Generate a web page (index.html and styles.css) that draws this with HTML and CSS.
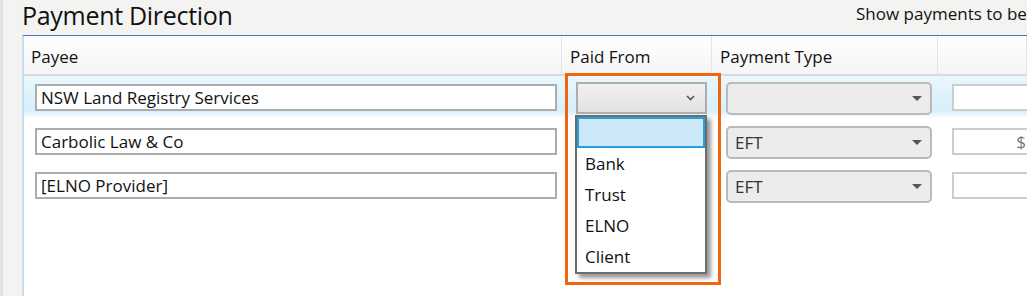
FILE: index.html
```html
<!DOCTYPE html>
<html lang="en">
<head>
  <meta charset="UTF-8" />
  <title>Payment Direction</title>
  <link rel="stylesheet" href="styles.css">
</head>
<body>
  <div class="window">
    <div class="titlebar">
      <h1>Payment Direction</h1>
      <span class="show-toggle">Show payments to be</span>
    </div>

    <div class="panel">
      <div class="grid head">
        <div class="cell">Payee</div>
        <div class="cell">Paid From</div>
        <div class="cell">Payment Type</div>
        <div class="cell"></div>
      </div>

      <div class="grid row selected">
        <div class="cell payee"><div class="textbox">NSW Land Registry Services</div></div>
        <div class="cell paid"><div class="combo flat">
          <svg class="chevron" width="9" height="6" viewBox="0 0 9 6"><polyline points="1,1 4.5,4.5 8,1" fill="none" stroke="#5a5a5a" stroke-width="1.6"/></svg>
        </div></div>
        <div class="cell type"><div class="combo round"><span class="arrow"></span></div></div>
        <div class="cell amount"><div class="textbox money"></div></div>
      </div>

      <div class="grid row">
        <div class="cell payee"><div class="textbox">Carbolic Law &amp; Co</div></div>
        <div class="cell paid"></div>
        <div class="cell type"><div class="combo round"><span class="value">EFT</span><span class="arrow"></span></div></div>
        <div class="cell amount"><div class="textbox money">$</div></div>
      </div>

      <div class="grid row">
        <div class="cell payee"><div class="textbox">[ELNO Provider]</div></div>
        <div class="cell paid"></div>
        <div class="cell type"><div class="combo round"><span class="value">EFT</span><span class="arrow"></span></div></div>
        <div class="cell amount"><div class="textbox money"></div></div>
      </div>
    </div>

    <ul class="dropdown">
      <li class="current"></li>
      <li>Bank</li>
      <li>Trust</li>
      <li>ELNO</li>
      <li>Client</li>
    </ul>

    <div class="callout"></div>
  </div>
</body>
</html>
```

FILE: styles.css
```css
html, body {
  margin: 0;
  padding: 0;
  width: 1027px;
  height: 296px;
  overflow: hidden;
  background: #f3f3f2;
  font-family: 'Open Sans', 'Noto Sans', sans-serif;
  color: #111;
}

.window {
  position: relative;
  height: 296px;
  border-left: 3px solid #e2e2e2;
  box-sizing: border-box;
}

.titlebar {
  height: 35px;
  display: flex;
  align-items: center;
  padding-left: 19px;
}

h1 {
  margin: 0;
  font-size: 25px;
  font-weight: normal;
  letter-spacing: -0.3px;
  line-height: 35px;
  margin-top: -4px;
}

.show-toggle {
  margin-left: auto;
  margin-right: -40px;
  font-size: 17px;
  white-space: nowrap;
  margin-top: -8px;
  width: 211px;
}

.panel {
  margin-left: 19px;
  height: 261px;
  background: #fff;
  border-top: 1px solid #3d7cbc;
  border-left: 2px solid #c7dcec;
}

.grid {
  display: grid;
  grid-template-columns: 538px 150px 226px 1fr;
}

.head {
  height: 38px;
  background: linear-gradient(#ffffff, #f5f5f5);
  border-bottom: 2px solid #dadada;
  font-size: 17px;
}

.head .cell {
  display: flex;
  align-items: center;
  padding-left: 8px;
  padding-top: 2px;
  border-right: 1px solid #e4e4e4;
}

.head .cell:first-child {
  padding-left: 7px;
}

.row {
  height: 44px;
  font-size: 17px;
}

.selected {
  background: linear-gradient(#eaf6fd 0%, #d6f0fc 80%, #ffffff 96%);
}

.row .cell {
  box-sizing: border-box;
}

.payee {
  padding: 8px 5px 0 11px;
}

.paid {
  padding: 6px 4px 0 14px;
}

.type {
  padding: 6px 6px 0 14px;
}

.amount {
  padding: 8px 0 0 14px;
}

.textbox {
  height: 27px;
  box-sizing: border-box;
  border: 2px solid #acacac;
  background: #fff;
  padding-left: 4px;
  display: flex;
  align-items: center;
  white-space: nowrap;
  overflow: hidden;
}

.textbox.money {
  border-color: #cdcdcd;
  justify-content: flex-end;
  padding-right: 6px;
  color: #777;
  width: 82px;
}

.combo {
  box-sizing: border-box;
  display: flex;
  align-items: center;
  position: relative;
}

.combo.flat {
  width: 131px;
  height: 32px;
  border: 2px solid #adadad;
  background: linear-gradient(#f0f0f0, #e3e3e3);
  justify-content: flex-end;
  padding-right: 10px;
}

.combo.round {
  width: 206px;
  height: 33px;
  border: 2px solid #bababa;
  border-radius: 5px;
  background: #ececec;
  padding-left: 7px;
}

.value {
  color: #333;
}

.arrow {
  margin-left: auto;
  margin-right: 8px;
  width: 0;
  height: 0;
  border-left: 5px solid transparent;
  border-right: 5px solid transparent;
  border-top: 5px solid #555;
}

.dropdown {
  position: absolute;
  left: 572px;
  top: 115px;
  width: 128px;
  margin: 0;
  padding: 0;
  list-style: none;
  background: #fff;
  border: 2px solid #6c6c6c;
  box-shadow: 4px 4px 4px rgba(0, 0, 0, 0.4);
  font-size: 17px;
}

.dropdown li {
  height: 31px;
  line-height: 31px;
  padding-left: 8px;
}

.dropdown li.current {
  height: 31px;
  box-sizing: border-box;
  background: #cce8f6;
  border: 2px solid #26a0da;
}

.callout {
  position: absolute;
  left: 562px;
  top: 73px;
  width: 150px;
  height: 206px;
  border: 3px solid #f0650f;
}
```
